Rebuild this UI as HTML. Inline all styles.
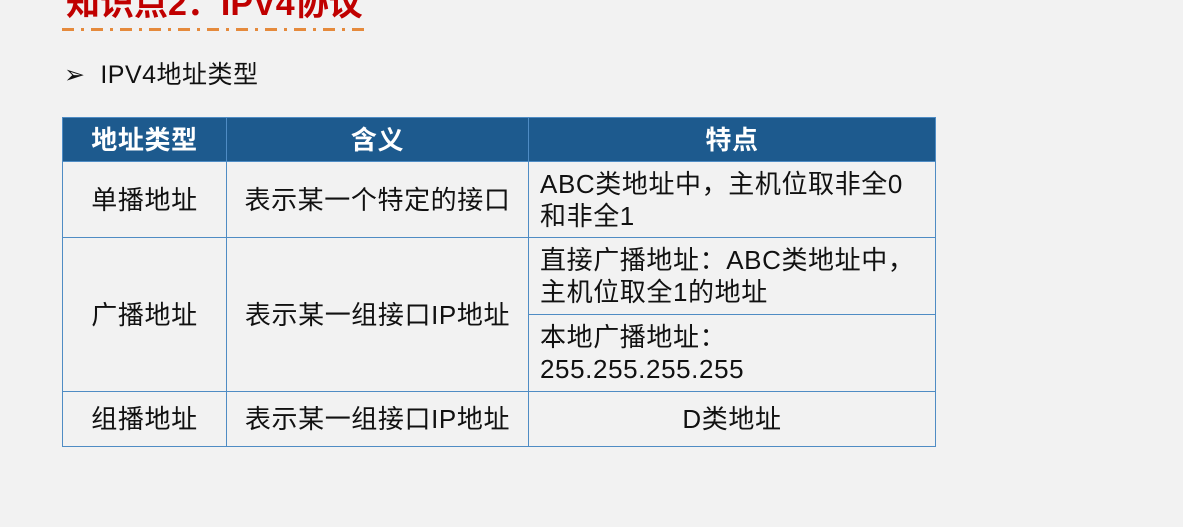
<!DOCTYPE html>
<html><head><meta charset="utf-8"><style>
body{margin:0;width:1183px;height:527px;background:#f2f2f2;overflow:hidden;position:relative;font-family:"Liberation Sans","Noto Sans CJK SC",sans-serif;color:#111}
.t{position:absolute;left:66px;top:-24px;font-size:34px;color:#c00000;font-weight:bold;white-space:nowrap}
.d{position:absolute;left:62px;top:28px;width:306px;height:3px;background:repeating-linear-gradient(90deg,#e58a3c 0 12px,transparent 12px 19px,#e58a3c 19px 22px,transparent 22px 29px)}
.s{position:absolute;left:64px;top:55px;font-size:25px;white-space:nowrap;letter-spacing:0.5px}
.c{position:absolute;box-sizing:border-box;border:1.5px solid #4f8cc4;display:flex;align-items:center;font-size:26px;letter-spacing:0.6px;line-height:32px;white-space:nowrap}
.h{background:#1d5a8e;color:#fff;font-weight:bold;justify-content:center}
.m{justify-content:center}
.l{padding-left:11px}
</style></head><body>
<div class="t">知识点2：IPV4协议</div>
<div class="d"></div>
<div class="s">➢&nbsp; IPV4地址类型</div>
<div class="c h" style="left:62px;top:117px;width:165px;height:45px">地址类型</div>
<div class="c h" style="left:226px;top:117px;width:303px;height:45px">含义</div>
<div class="c h" style="left:528px;top:117px;width:408px;height:45px">特点</div>
<div class="c m" style="left:62px;top:161px;width:165px;height:77px">单播地址</div>
<div class="c m" style="left:226px;top:161px;width:303px;height:77px">表示某一个特定的接口</div>
<div class="c l" style="left:528px;top:161px;width:408px;height:77px">ABC类地址中，主机位取非全0<br>和非全1</div>
<div class="c m" style="left:62px;top:237px;width:165px;height:155px">广播地址</div>
<div class="c m" style="left:226px;top:237px;width:303px;height:155px">表示某一组接口IP地址</div>
<div class="c l" style="left:528px;top:237px;width:408px;height:78px">直接广播地址：ABC类地址中，<br>主机位取全1的地址</div>
<div class="c l" style="left:528px;top:314px;width:408px;height:78px">本地广播地址：<br>255.255.255.255</div>
<div class="c m" style="left:62px;top:391px;width:165px;height:56px">组播地址</div>
<div class="c m" style="left:226px;top:391px;width:303px;height:56px">表示某一组接口IP地址</div>
<div class="c m" style="left:528px;top:391px;width:408px;height:56px">D类地址</div>
</body></html>
